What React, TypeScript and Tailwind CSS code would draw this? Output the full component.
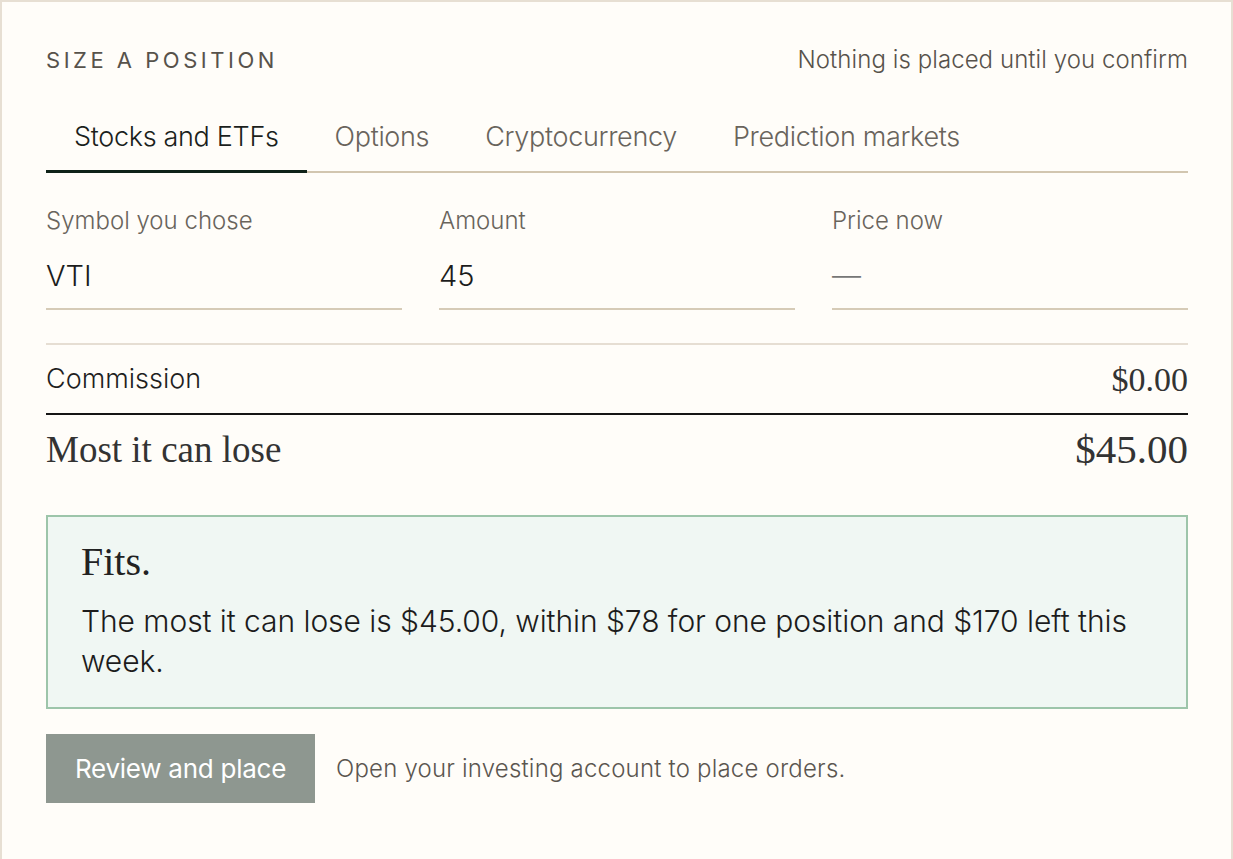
import { FC } from "react";

const tabs = ["Stocks and ETFs", "Options", "Cryptocurrency", "Prediction markets"];

const fields = [
  { label: "Symbol you chose", value: "VTI", empty: false },
  { label: "Amount", value: "45", empty: false },
  { label: "Price now", value: "—", empty: true },
];

const sans = "font-['Inter','Liberation_Sans',sans-serif]";
const serif = "font-['Liberation_Serif','DejaVu_Serif',serif]";

const App: FC = () => {
  return (
    <div className={`min-h-screen bg-[#fffdf9] ${sans}`}>
      <div className="min-h-[900px] border-2 border-[#e7dfd3] bg-[#fffdf9] pt-[38px] pl-[44px] pr-[43px]">
        {/* header */}
        <div className="flex h-[40px] items-center justify-between">
          <span className="text-[22px] font-normal uppercase tracking-[0.16em] text-[#57524b]">
            Size a position
          </span>
          <span className="text-[24px] font-light tracking-[0.003em] text-[#57524b]">
            Nothing is placed until you confirm
          </span>
        </div>

        {/* tabs */}
        <div className="mt-[20px] flex border-b-2 border-[#d2c6b0]">
          {tabs.map((tab, i) => (
            <div
              key={tab}
              className={
                i === 0
                  ? "-mb-[2px] flex h-[73px] items-center border-b-[3px] border-[#0f2218] px-[28px] pt-[5px] text-[27px] font-light tracking-[-0.012em] text-[#1b1f1c]"
                  : "flex h-[71px] items-center px-[28px] pt-[3px] text-[27px] font-light tracking-[-0.012em] text-[#69645c]"
              }
            >
              {tab}
            </div>
          ))}
        </div>

        {/* fields */}
        <div className="mt-[32px] grid grid-cols-3 gap-[37px]">
          {fields.map((f) => (
            <div key={f.label} className="border-b-2 border-[#d6cbb7] pb-[12px]">
              <div className="flex h-[32px] items-center text-[24px] font-light text-[#69645c]">
                {f.label}
              </div>
              <div
                className={
                  f.empty
                    ? "mt-[19px] flex h-[40px] items-center text-[29px] font-light text-[#777]"
                    : "mt-[19px] flex h-[40px] items-center text-[29px] font-light text-[#1c1c1c]"
                }
              >
                {f.value}
              </div>
            </div>
          ))}
        </div>

        {/* totals */}
        <div className="mt-[33px] border-t-2 border-[#e6ded3]">
          <div className="flex h-[70px] items-center justify-between border-b-2 border-[#151515]">
            <span className="text-[27px] font-light text-[#1f1f1f]">Commission</span>
            <span className={`${serif} text-[34px] text-[#333]`}>$0.00</span>
          </div>
          <div className="flex h-[70px] items-center justify-between">
            <span className={`${serif} text-[37px] text-[#333]`}>Most it can lose</span>
            <span className={`${serif} text-[41px] text-[#333]`}>$45.00</span>
          </div>
        </div>

        {/* result box */}
        <div className="mt-[30px] h-[194px] border-2 border-[#9dc5aa] bg-[#f0f7f3] pl-[33px] pr-[40px] pt-[21px]">
          <div className={`${serif} flex h-[48px] items-center text-[40px] text-[#222]`}>
            Fits.
          </div>
          <p className="mt-[15px] text-[30px] font-light leading-[40px] tracking-[-0.002em] text-[#1c1c1c]">
            The most it can lose is $45.00, within $78 for one position and $170 left this week.
          </p>
        </div>

        {/* actions */}
        <div className="mt-[25px] flex items-center gap-[21px]">
          <button className="h-[69px] bg-[#8e9790] px-[29px] text-[26px] font-normal tracking-[-0.01em] text-white">
            Review and place
          </button>
          <span className="text-[24px] font-light tracking-[0.008em] text-[#5b5650]">
            Open your investing account to place orders.
          </span>
        </div>
      </div>
    </div>
  );
};

export default App;
